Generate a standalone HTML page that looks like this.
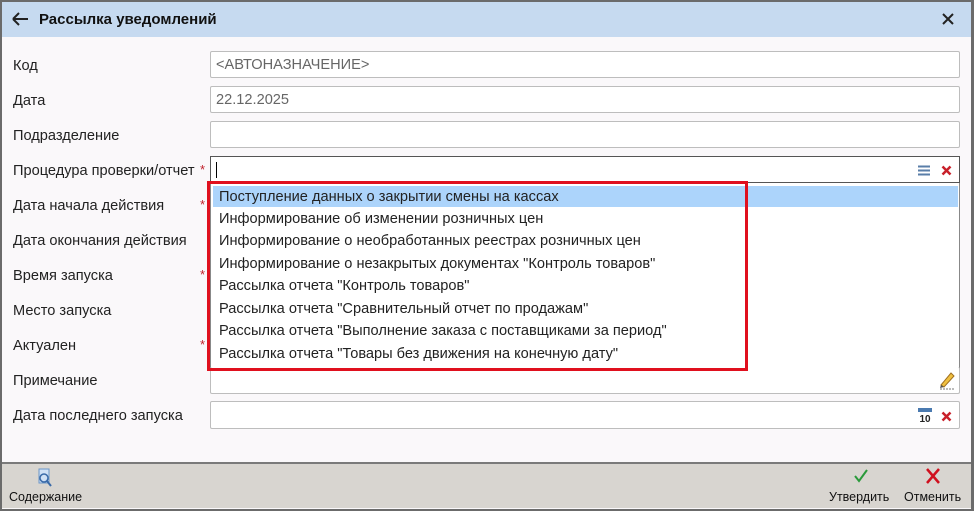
<!DOCTYPE html>
<html><head><meta charset="utf-8"><style>
*{margin:0;padding:0;box-sizing:border-box}
body{width:974px;height:511px;overflow:hidden;background:#fff;font-family:"Liberation Sans",Arial,sans-serif;font-size:14px;color:#222;position:relative}
.frame{position:absolute;left:0;top:0;width:974px;height:511px;border:2px solid #6b6b6b;border-right-width:3px;background:#faf8fa}
.hdr{position:absolute;left:2px;top:2px;width:969px;height:35px;background:#c6daf0}
.hdr .t{position:absolute;left:37px;top:9px;font-weight:bold;font-size:15px;color:#111}
.lbl{position:absolute;left:13px;font-size:14.6px;color:#222}
.star{position:absolute;color:#c0202a;font-size:13px}
.fld{position:absolute;left:210px;width:750px;height:27px;background:#fff;border:1px solid #bdbdbd;border-radius:2px}
.fld span{position:absolute;left:5px;top:5px;color:#666;font-size:14.6px}
.item{position:absolute;left:219px;font-size:14.6px;color:#222}
.ftr{position:absolute;left:2px;top:462px;width:969px;height:46px;background:#d8d5d0;border-top:2px solid #7a7a7a}
.ftr .b{position:absolute;font-size:12.5px;color:#111}
</style></head><body>
<div class="frame"></div>
<div class="hdr">
<svg style="position:absolute;left:9px;top:9px" width="18" height="16"><path d="M2 8H17M2 8L8 2M2 8L8 14" stroke="#222" stroke-width="2" fill="none"/></svg>
<div class="t">Рассылка уведомлений</div>
<svg style="position:absolute;left:940px;top:11px" width="12" height="12"><path d="M1 1L11 11M11 1L1 11" stroke="#222" stroke-width="2"/></svg>
</div>
<div class="lbl" style="top:58px">Код</div>
<div class="lbl" style="top:93px">Дата</div>
<div class="lbl" style="top:128px">Подразделение</div>
<div class="lbl" style="top:163px">Процедура проверки/отчет</div>
<div class="lbl" style="top:198px">Дата начала действия</div>
<div class="lbl" style="top:233px">Дата окончания действия</div>
<div class="lbl" style="top:268px">Время запуска</div>
<div class="lbl" style="top:303px">Место запуска</div>
<div class="lbl" style="top:338px">Актуален</div>
<div class="lbl" style="top:373px">Примечание</div>
<div class="lbl" style="top:408px">Дата последнего запуска</div>
<div class="star" style="left:200px;top:162px">*</div>
<div class="star" style="left:200px;top:197px">*</div>
<div class="star" style="left:200px;top:267px">*</div>
<div class="star" style="left:200px;top:337px">*</div>
<div class="fld" style="top:51px"><span>&lt;АВТОНАЗНАЧЕНИЕ&gt;</span></div>
<div class="fld" style="top:86px"><span>22.12.2025</span></div>
<div class="fld" style="top:121px"></div>
<div class="fld" style="top:156px;border-color:#555;border-radius:0">
<div style="position:absolute;left:5px;top:5px;width:1px;height:16px;background:#000"></div>
<svg style="position:absolute;left:706px;top:8px" width="14" height="11"><path d="M1 1.5H13M1 5.5H13M1 9.5H13" stroke="#5a7ea8" stroke-width="2"/></svg>
<svg style="position:absolute;left:730px;top:8px" width="11" height="11"><path d="M1.5 1.5L9.5 9.5M9.5 1.5L1.5 9.5" stroke="#c8202a" stroke-width="2.5"/></svg>
</div>
<div style="position:absolute;left:210px;top:183px;width:750px;height:186px;background:#fff;border:1px solid #888;border-top:none"></div>
<div style="position:absolute;left:213px;top:186px;width:745px;height:21px;background:#acd4fb"></div>
<div class="fld" style="top:367px;height:27px;border-top:none">
<svg style="position:absolute;left:727px;top:3px" width="18" height="20"><path d="M3 15L13 3L16 6L6 17Z" fill="#f0c040" stroke="#a07020" stroke-width="1"/><path d="M3 15L2 18L6 17Z" fill="#555"/><path d="M2 19H16" stroke="#777" stroke-dasharray="2 1"/></svg>
</div>
<div class="fld" style="top:401px;height:28px">
<svg style="position:absolute;left:706px;top:5px" width="16" height="16"><rect x="1" y="1" width="14" height="4" fill="#4a7ab0"/><text x="8" y="15" font-size="10" font-family="Liberation Sans" text-anchor="middle" fill="#222" font-weight="bold">10</text></svg>
<svg style="position:absolute;left:730px;top:9px" width="11" height="11"><path d="M1.5 1.5L9.5 9.5M9.5 1.5L1.5 9.5" stroke="#c8202a" stroke-width="2.5"/></svg>
</div>
<div class="item" style="top:189px">Поступление данных о закрытии смены на кассах</div>
<div class="item" style="top:211px">Информирование об изменении розничных цен</div>
<div class="item" style="top:233px">Информирование о необработанных реестрах розничных цен</div>
<div class="item" style="top:256px">Информирование о незакрытых документах "Контроль товаров"</div>
<div class="item" style="top:278px">Рассылка отчета "Контроль товаров"</div>
<div class="item" style="top:301px">Рассылка отчета "Сравнительный отчет по продажам"</div>
<div class="item" style="top:323px">Рассылка отчета "Выполнение заказа с поставщиками за период"</div>
<div class="item" style="top:346px">Рассылка отчета "Товары без движения на конечную дату"</div>
<div style="position:absolute;left:207px;top:181px;width:541px;height:190px;border:3px solid #e0101e"></div>
<div class="ftr">
<svg style="position:absolute;left:34px;top:4px" width="18" height="20"><rect x="3" y="1" width="10" height="14" fill="#cfe0f5" stroke="#6b96c8"/><circle cx="8" cy="10" r="4" fill="none" stroke="#3a6aa8" stroke-width="1.5"/><path d="M11 13L15 18" stroke="#3a6aa8" stroke-width="2"/></svg>
<div class="b" style="left:7px;top:26px">Содержание</div>
<svg style="position:absolute;left:851px;top:4px" width="16" height="16"><path d="M2 8L6 13L14 2" stroke="#2a9a3a" stroke-width="2" fill="none"/></svg>
<div class="b" style="left:827px;top:26px">Утвердить</div>
<svg style="position:absolute;left:922px;top:3px" width="18" height="18"><path d="M3 2L15 16M15 2L3 16" stroke="#d0101e" stroke-width="2.5"/></svg>
<div class="b" style="left:902px;top:26px">Отменить</div>
</div>
</body></html>
